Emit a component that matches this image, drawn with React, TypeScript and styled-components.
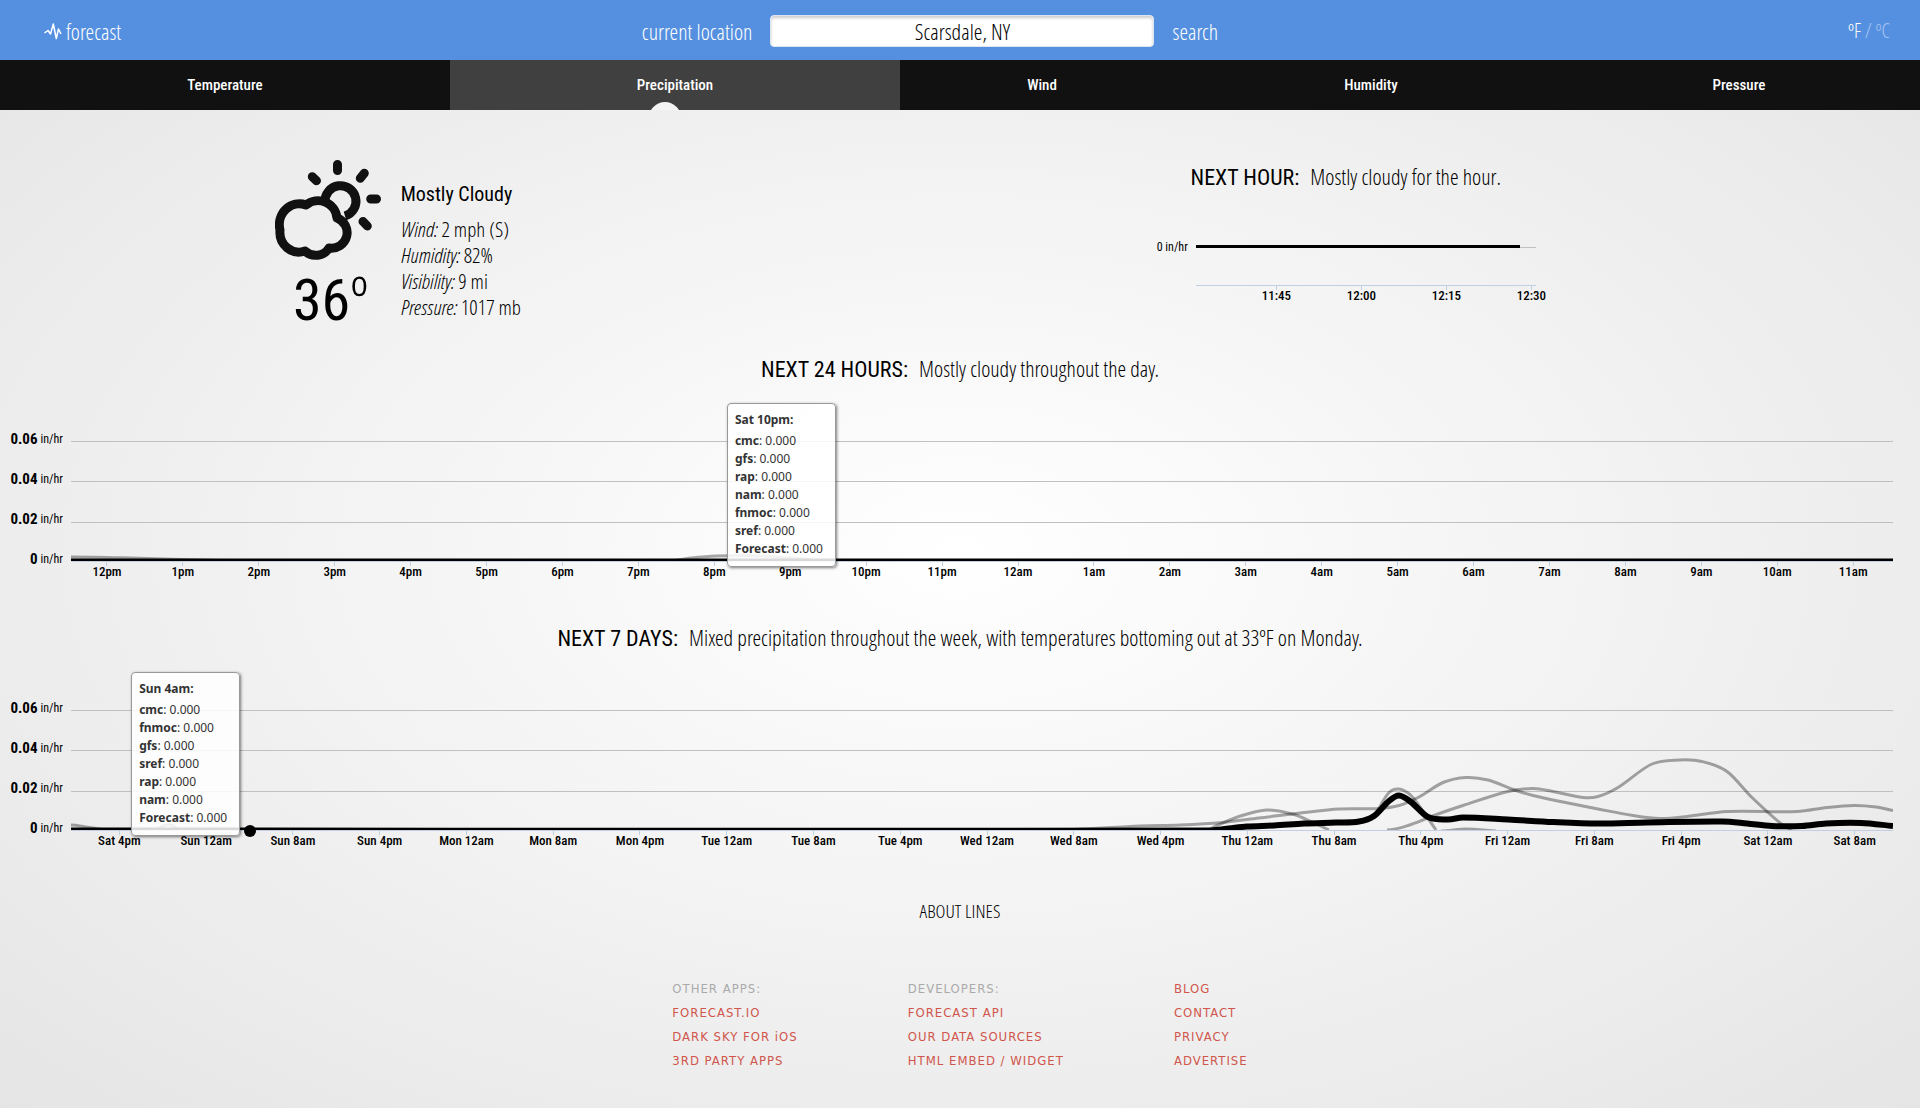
import React from 'react';
import styled, { createGlobalStyle } from 'styled-components';

const light = '"Open Sans Condensed Light", "Open Sans Condensed", "Open Sans", sans-serif';
const medium = '"Roboto Condensed", Roboto, sans-serif';
const humanist = '"Noto Sans", sans-serif';

const GlobalStyle = createGlobalStyle`
  * { box-sizing: border-box; }
  body {
    margin: 0;
    min-height: 100vh;
    background: radial-gradient(ellipse farthest-corner at 50% 50%, #ffffff, #e5e5e5) no-repeat;
    font-family: ${light};
    font-weight: 300;
    color: #000;
  }
  button, input { font-family: inherit; font-weight: inherit; }
  button { border: 0; padding: 0; background: none; cursor: pointer; }
`;

const Header = styled.header`
  display: grid;
  grid-template-columns: 1fr auto 1fr;
  align-items: center;
  height: 60px;
  padding: 2px 30px 0 44px;
  background: #5590e0;
  color: #fff;
`;

const Logo = styled.a`
  display: inline-flex;
  align-items: center;
  gap: 4px;
  font-size: 22px;
  line-height: 24px;
  color: #fff;
  text-decoration: none;
`;

const SearchForm = styled.form`
  display: flex;
  align-items: center;
  gap: 18px;
  margin-right: 74px;
`;

const HeaderButton = styled.button`
  font-size: 22px;
  line-height: 24px;
  color: #fff;
`;

const SearchInput = styled.input`
  width: 384px;
  height: 32px;
  border: 1px solid #dde6f2;
  border-radius: 4px;
  background: #fff;
  box-shadow: inset 0 2px 3px rgba(0, 0, 0, 0.2);
  text-align: center;
  font-size: 22px;
  color: #000;
`;

const Units = styled.div`
  justify-self: end;
  font-size: 20px;
  line-height: 24px;
  color: #a5c4f0;
`;

const UnitButton = styled.button<{ $on?: boolean }>`
  font-size: 20px;
  line-height: 24px;
  color: ${(p) => (p.$on ? '#fff' : '#a5c4f0')};
`;

const Nav = styled.nav`
  display: flex;
  height: 50px;
  background: #111;
`;

const Tab = styled.button<{ $grow: number; $active?: boolean }>`
  position: relative;
  flex: ${(p) => p.$grow} 0 0;
  overflow: hidden;
  background: ${(p) => (p.$active ? '#404040' : '#111')};
  color: #fff;
  font-family: ${medium};
  font-size: 15px;
  font-weight: 500;
`;

const Notch = styled.span`
  position: absolute;
  left: calc(50% - 26px);
  top: 42px;
  width: 32px;
  height: 32px;
  border-radius: 50%;
  background: #f4f4f4;
`;

const Overview = styled.section`
  display: grid;
  grid-template-columns: 5fr 7fr;
  height: 243px;
  padding-right: 20px;
`;

const Current = styled.div`
  display: flex;
  justify-content: center;
  gap: 20px;
  padding: 50px 0 0 4px;
`;

const IconColumn = styled.div`
  display: flex;
  flex-direction: column;
  align-items: center;
`;

const Degrees = styled.div`
  display: flex;
  align-items: flex-start;
  margin-top: 8px;
  padding-left: 6px;
  font-family: ${medium};
  font-weight: 400;
  font-size: 58px;
  line-height: 60px;
`;

const DegreeMark = styled.span`
  font-family: ${light};
  font-weight: 300;
  font-size: 60px;
  line-height: 54px;
`;

const Facts = styled.div`
  padding-top: 18px;
`;

const Condition = styled.h2`
  margin: 0 0 6px;
  font-family: ${medium};
  font-size: 20px;
  font-weight: 400;
  line-height: 32px;
`;

const Fact = styled.div`
  font-size: 21px;
  line-height: 26px;
`;

const NextHour = styled.div`
  display: flex;
  flex-direction: column;
  align-items: center;
  padding-top: 51px;
`;

const Heading = styled.h2`
  display: flex;
  justify-content: center;
  align-items: baseline;
  gap: 11px;
  height: 32px;
  margin: 0;
  font-family: ${medium};
  font-size: 22px;
  font-weight: 400;
  line-height: 34px;
`;

const Summary = styled.span`
  font-family: ${light};
  font-weight: 300;
  font-size: 22px;
  line-height: 24px;
`;

const HourChart = styled.div`
  display: grid;
  grid-template-columns: 32px 340px;
  column-gap: 8px;
  margin-top: 43px;
`;

const HourLabel = styled.span`
  display: flex;
  justify-content: flex-end;
  font-family: ${medium};
  font-weight: 400;
  font-size: 12px;
  line-height: 22px;
  white-space: nowrap;
`;

const HourPlot = styled.div`
  height: 49px;
`;

const Section = styled.section`
  height: 269px;
`;

const Chart = styled.div`
  display: grid;
  grid-template-columns: 63px 1fr;
  column-gap: 8px;
  margin: 16px 27px 0 0;
`;

const YLabels = styled.div`
  display: flex;
  flex-direction: column;
  padding-top: 8px;
`;

const YLabel = styled.div`
  display: flex;
  justify-content: flex-end;
  align-items: flex-end;
  gap: 3px;
  height: 40px;
  line-height: 20px;
  font-family: ${medium};
  font-size: 15px;
  font-weight: 700;
`;

const Unit = styled.span`
  font-size: 12px;
  font-weight: 400;
`;

const Plot = styled.div`
  position: relative;
`;

const Lines = styled.svg`
  display: block;
  width: 100%;
  height: 160px;
`;

const Axis = styled.div`
  border-top: 1px solid #c0d0e0;
`;

const Ticks = styled.div<{ $shift: number }>`
  display: flex;
  margin: 0 ${(p) => -p.$shift}px 0 ${(p) => p.$shift}px;
`;

const Tick = styled.div`
  flex: 1 1 0;
  text-align: center;
  font-family: ${medium};
  font-size: 13px;
  line-height: 12px;
  font-weight: 500;
  white-space: nowrap;
  &::before {
    content: '';
    display: block;
    width: 1px;
    height: 4px;
    margin: 0 auto;
    background: #c0d0e0;
  }
`;

const Tip = styled.div`
  position: absolute;
  top: 2px;
  width: 109px;
  padding: 7px 0 8px 7px;
  border: 1px solid #999;
  border-radius: 4px;
  background: rgba(255, 255, 255, 0.85);
  box-shadow: 1px 1px 3px rgba(0, 0, 0, 0.5);
  font-family: ${humanist};
  font-weight: 400;
  font-size: 12px;
  line-height: 18px;
  color: #333;
  white-space: nowrap;
`;

const TipTitle = styled.div`
  margin-bottom: 3px;
  font-weight: 700;
`;

const Dot = styled.span`
  position: absolute;
  top: 155px;
  width: 12px;
  height: 12px;
  border-radius: 50%;
  background: #000;
`;

const About = styled.div`
  padding-top: 8px;
  text-align: center;
  font-size: 19px;
  line-height: 24px;
`;

const AboutLink = styled.a`
  color: #000;
  text-decoration: none;
`;

const Footer = styled.footer`
  display: flex;
  justify-content: center;
  gap: 110px;
  padding: 54px 0 35px;
  font-family: "DejaVu Sans Condensed", "DejaVu Sans", sans-serif;
  font-weight: 400;
  font-size: 13px;
  line-height: 24px;
  letter-spacing: 1px;
`;

const FooterColumn = styled.div`
  display: flex;
  flex-direction: column;
`;

const FooterTitle = styled.span`
  color: #aaa;
`;

const FooterLink = styled.a`
  color: #d0554b;
  text-decoration: none;
`;

type Point = [number, number];

/* Smooth curve through the points, with control handles kept short of each neighbour. */
function curve(points: Point[]): string {
  let d = `M${points[0][0]} ${points[0][1]}`;
  for (let i = 0; i < points.length - 1; i++) {
    const a = points[Math.max(i - 1, 0)];
    const b = points[i];
    const c = points[i + 1];
    const e = points[Math.min(i + 2, points.length - 1)];
    const w = (c[0] - b[0]) / 3;
    const s1 = a === b ? 0 : (c[1] - a[1]) / (c[0] - a[0]);
    const s2 = e === c ? (c[1] - b[1]) / (c[0] - b[0]) : (e[1] - b[1]) / (e[0] - b[0]);
    d += `C${b[0] + w} ${b[1] + s1 * w} ${c[0] - w} ${c[1] - s2 * w} ${c[0]} ${c[1]}`;
  }
  return d;
}

const dayModels: Point[][] = [
  [[0, 156], [60, 157], [130, 159], [210, 161]],
  [[590, 161], [620, 157], [645, 155], [690, 155], [765, 161]],
];
const dayForecast: Point[] = [[0, 160.5], [1822, 160.5]];

const weekModels: Point[][] = [
  [[0, 155], [15, 157], [40, 161]],
  [[84, 160], [92, 156], [100, 155], [108, 160]],
  [[980, 160], [1069, 156], [1109, 155], [1151, 152.5], [1188, 148], [1233, 142.5], [1268, 139], [1308, 138.5], [1328, 135.5], [1348, 127], [1372, 112.5], [1395, 107.5], [1417, 110], [1442, 119.5], [1462, 125.5], [1492, 132], [1527, 139], [1562, 145.5], [1589, 148.5], [1616, 146.5], [1656, 141.5], [1726, 141.5], [1756, 137.5], [1783, 135.5], [1805, 137], [1822, 140.5]],
  [[1136, 160], [1146, 155.5], [1168, 146.5], [1196, 140], [1223, 144.5], [1243, 153], [1258, 160]],
  [[1316, 160], [1340, 154.5], [1367, 144], [1392, 135.5], [1437, 121.5], [1462, 118.5], [1482, 121.5], [1512, 127.5], [1527, 126.5], [1547, 117.5], [1581, 94], [1609, 90], [1631, 91.5], [1656, 101.5], [1681, 127.5], [1711, 154.5], [1721, 160]],
  [[1298, 149], [1318, 122.5], [1328, 119], [1340, 125.5], [1353, 142.5], [1365, 160]],
  [[1370, 161], [1395, 159], [1425, 161]],
];
const weekForecast: Point[] = [[0, 160.5], [1140, 160.5], [1158, 158.5], [1176, 156.5], [1203, 155.5], [1233, 153.5], [1265, 152.5], [1288, 151.5], [1303, 146], [1318, 131], [1328, 125.5], [1340, 132], [1357, 147], [1377, 149.5], [1392, 147.5], [1437, 149.5], [1482, 152], [1527, 153.5], [1576, 152.5], [1651, 151.5], [1676, 153.5], [1701, 156], [1731, 156], [1755, 153.5], [1790, 153], [1822, 156]];

const hours = ['12pm', '1pm', '2pm', '3pm', '4pm', '5pm', '6pm', '7pm', '8pm', '9pm', '10pm', '11pm', '12am', '1am', '2am', '3am', '4am', '5am', '6am', '7am', '8am', '9am', '10am', '11am'];
const days = ['Sat 4pm', 'Sun 12am', 'Sun 8am', 'Sun 4pm', 'Mon 12am', 'Mon 8am', 'Mon 4pm', 'Tue 12am', 'Tue 8am', 'Tue 4pm', 'Wed 12am', 'Wed 8am', 'Wed 4pm', 'Thu 12am', 'Thu 8am', 'Thu 4pm', 'Fri 12am', 'Fri 8am', 'Fri 4pm', 'Sat 12am', 'Sat 8am'];
const minutes = ['11:45', '12:00', '12:15', '12:30'];
const tabs = [
  { name: 'Temperature', grow: 450 },
  { name: 'Precipitation', grow: 450 },
  { name: 'Wind', grow: 284 },
  { name: 'Humidity', grow: 374 },
  { name: 'Pressure', grow: 362 },
];

interface PrecipChartProps {
  label: string;
  models: Point[][];
  forecast: Point[];
  ticks: string[];
  shift: number;
  tipTitle: string;
  tipRows: string[];
  tipAt: number;
  dotAt?: number;
}

function PrecipChart({ label, models, forecast, ticks, shift, tipTitle, tipRows, tipAt, dotAt }: PrecipChartProps) {
  return (
    <Chart>
      <YLabels>
        {['0.06', '0.04', '0.02', '0'].map((v) => (
          <YLabel key={v}>{v}<Unit>in/hr</Unit></YLabel>
        ))}
      </YLabels>
      <Plot>
        <Lines viewBox="0 0 1822 160" preserveAspectRatio="none" role="img" aria-label={label}>
          {[40.5, 80.5, 121.5].map((y) => (
            <path key={y} d={`M0 ${y}H1822`} stroke="#c0c0c0" />
          ))}
          {models.map((m, i) => (
            <path key={i} d={curve(m)} fill="none" stroke="#000" strokeOpacity="0.34" strokeWidth="3" vectorEffect="non-scaling-stroke" />
          ))}
          <path d={curve(forecast)} fill="none" stroke="#000" strokeWidth="6" strokeLinejoin="round" vectorEffect="non-scaling-stroke" />
        </Lines>
        <Axis>
          <Ticks $shift={shift}>
            {ticks.map((t) => <Tick key={t}>{t}</Tick>)}
          </Ticks>
        </Axis>
        {dotAt !== undefined && <Dot style={{ left: `calc(${dotAt}% - 6px)` }} />}
        <Tip style={{ left: `${tipAt}%` }}>
          <TipTitle>{tipTitle}</TipTitle>
          {tipRows.map((r) => <div key={r}><b>{r}</b>: 0.000</div>)}
        </Tip>
      </Plot>
    </Chart>
  );
}

function CloudSun() {
  return (
    <svg width="106" height="102" viewBox="0 0 106 102" fill="none" stroke="#111" strokeWidth="9" strokeLinecap="round" strokeLinejoin="round" aria-hidden="true">
      <path d="M62.5 4.5V10.5M37.3 16.7L41.5 20.7M89.3 13.3L85.3 18.3M95.7 39H101.5M88 61.5L92.3 66" />
      <path strokeLinecap="butt" d="M50 42A15.5 15.5 0 1 1 70 56" />
      <path d="M5 70A20 21 0 0 1 31 45A19 19 0 0 1 62 58A15.6 15.6 0 0 1 54 88A15 14 0 0 1 30 91A19 20 0 0 1 5 70Z" />
    </svg>
  );
}

export default function App() {
  return (
    <>
      <GlobalStyle />
      <Header>
        <Logo href="#">
          <svg width="18" height="18" viewBox="0 0 18 18" fill="none" stroke="#fff" strokeWidth="1.5" strokeLinejoin="round" aria-hidden="true">
            <path d="M0.5 11L4 8.5L6.5 12L9.3 2L12.3 16.5L14.5 7L17 12" />
          </svg>
          forecast
        </Logo>
        <SearchForm onSubmit={(e) => e.preventDefault()}>
          <HeaderButton type="button">current location</HeaderButton>
          <SearchInput aria-label="Location" defaultValue="Scarsdale, NY" />
          <HeaderButton type="submit">search</HeaderButton>
        </SearchForm>
        <Units>
          <UnitButton type="button" $on>ºF</UnitButton> / <UnitButton type="button">ºC</UnitButton>
        </Units>
      </Header>
      <Nav>
        {tabs.map((t) => (
          <Tab key={t.name} type="button" $grow={t.grow} $active={t.name === 'Precipitation'}>
            {t.name}
            {t.name === 'Precipitation' && <Notch />}
          </Tab>
        ))}
      </Nav>
      <main>
        <Overview>
          <Current>
            <IconColumn>
              <CloudSun />
              <Degrees>36<DegreeMark>º</DegreeMark></Degrees>
            </IconColumn>
            <Facts>
              <Condition>Mostly Cloudy</Condition>
              <Fact><i>Wind:</i> 2 mph (S)</Fact>
              <Fact><i>Humidity:</i> 82%</Fact>
              <Fact><i>Visibility:</i> 9 mi</Fact>
              <Fact><i>Pressure:</i> 1017 mb</Fact>
            </Facts>
          </Current>
          <NextHour>
            <Heading>NEXT HOUR: <Summary>Mostly cloudy for the hour.</Summary></Heading>
            <HourChart>
              <HourLabel>0 in/hr</HourLabel>
              <div>
                <HourPlot>
                  <Lines viewBox="0 0 340 160" role="img" aria-label="Precipitation over the next hour" preserveAspectRatio="xMinYMin slice">
                    <path d="M0 11.5H340" stroke="#c0c0c0" />
                    <path d="M0 10.5H324" stroke="#000" strokeWidth="3" />
                  </Lines>
                </HourPlot>
                <Axis>
                  <Ticks $shift={38}>
                    {minutes.map((t) => <Tick key={t}>{t}</Tick>)}
                  </Ticks>
                </Axis>
              </div>
            </HourChart>
          </NextHour>
        </Overview>
        <Section>
          <Heading>NEXT 24 HOURS: <Summary>Mostly cloudy throughout the day.</Summary></Heading>
          <PrecipChart
            label="Precipitation over the next 24 hours"
            models={dayModels}
            forecast={dayForecast}
            ticks={hours}
            shift={-2}
            tipTitle="Sat 10pm:"
            tipRows={['cmc', 'gfs', 'rap', 'nam', 'fnmoc', 'sref', 'Forecast']}
            tipAt={36}
          />
        </Section>
        <Section>
          <Heading>NEXT 7 DAYS: <Summary>Mixed precipitation throughout the week, with temperatures bottoming out at 33ºF on Monday.</Summary></Heading>
          <PrecipChart
            label="Precipitation over the next 7 days"
            models={weekModels}
            forecast={weekForecast}
            ticks={days}
            shift={5}
            tipTitle="Sun 4am:"
            tipRows={['cmc', 'fnmoc', 'gfs', 'sref', 'rap', 'nam', 'Forecast']}
            tipAt={3.3}
            dotAt={9.8}
          />
        </Section>
        <About><AboutLink href="#">ABOUT LINES</AboutLink></About>
      </main>
      <Footer>
        <FooterColumn>
          <FooterTitle>OTHER APPS:</FooterTitle>
          <FooterLink href="#">FORECAST.IO</FooterLink>
          <FooterLink href="#">DARK SKY FOR iOS</FooterLink>
          <FooterLink href="#">3RD PARTY APPS</FooterLink>
        </FooterColumn>
        <FooterColumn>
          <FooterTitle>DEVELOPERS:</FooterTitle>
          <FooterLink href="#">FORECAST API</FooterLink>
          <FooterLink href="#">OUR DATA SOURCES</FooterLink>
          <FooterLink href="#">HTML EMBED / WIDGET</FooterLink>
        </FooterColumn>
        <FooterColumn>
          <FooterLink href="#">BLOG</FooterLink>
          <FooterLink href="#">CONTACT</FooterLink>
          <FooterLink href="#">PRIVACY</FooterLink>
          <FooterLink href="#">ADVERTISE</FooterLink>
        </FooterColumn>
      </Footer>
    </>
  );
}
